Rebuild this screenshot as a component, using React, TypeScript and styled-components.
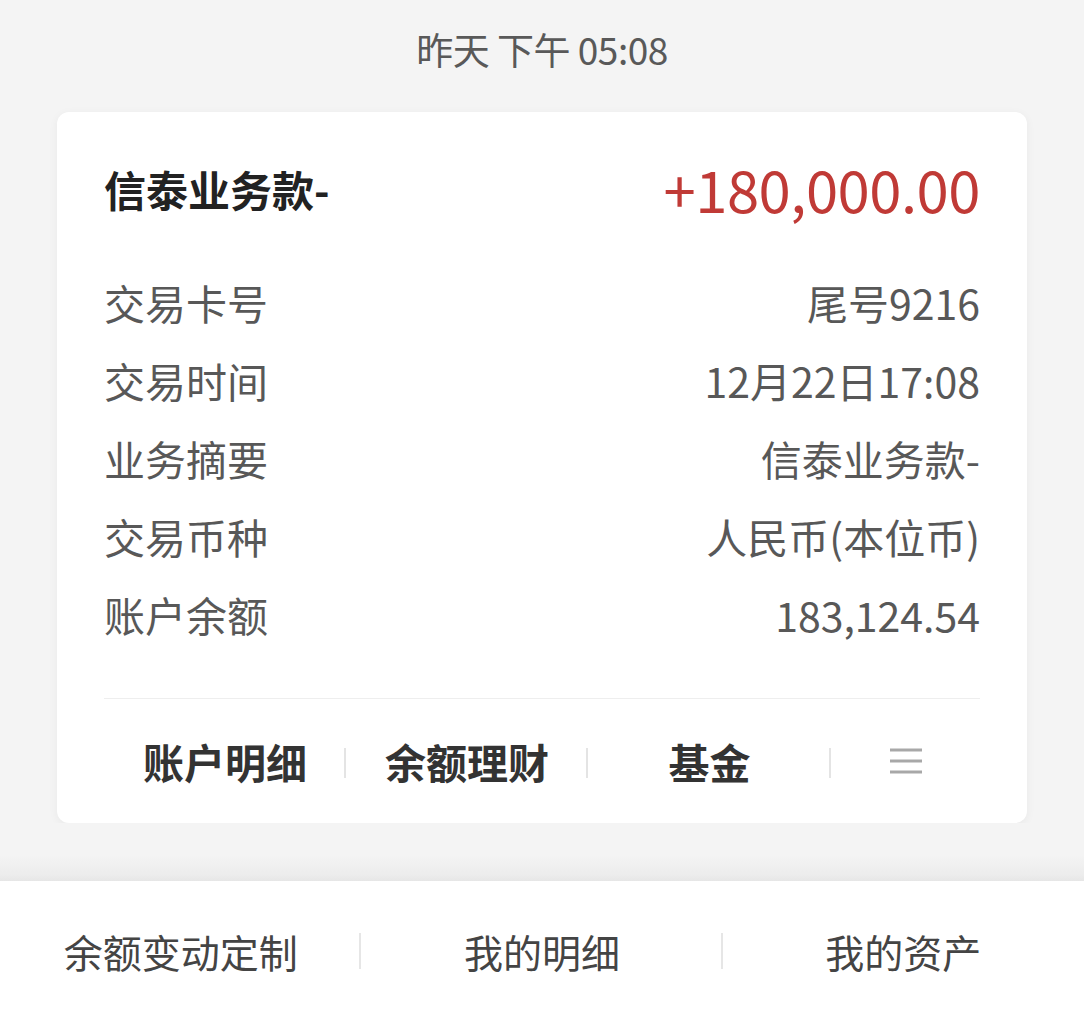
import React from "react";
import styled, { createGlobalStyle } from "styled-components";

const GlobalStyle = createGlobalStyle`
  html, body { margin: 0; padding: 0; background: #f4f4f4; }
  body { font-family: "Noto Sans CJK SC", "Noto Sans", sans-serif; }
  * { box-sizing: border-box; }
`;

const Page = styled.div`
  width: 1084px;
  min-height: 1018px;
  background: #f4f4f4;
  display: flex;
  flex-direction: column;
`;

const TimeBar = styled.div`
  height: 98px;
  display: flex;
  align-items: center;
  justify-content: center;
  font-size: 37px;
  color: #595959;
  letter-spacing: -0.5px;
`;

const Card = styled.div`
  margin: 14px 57px 0;
  background: #ffffff;
  border-radius: 12px;
  box-shadow: 0 2px 10px rgba(0, 0, 0, 0.05);
  padding: 46px 47px 27px;
`;

const Header = styled.div`
  height: 60px;
  display: flex;
  align-items: center;
  justify-content: space-between;
`;

const Title = styled.div`
  font-size: 42px;
  font-weight: 700;
  color: #222;
`;

const Amount = styled.div`
  font-size: 58px;
  font-weight: 400;
  color: #c03a36;
  letter-spacing: -0.5px;
`;

const Rows = styled.div`
  margin-top: 45px;
  display: flex;
  flex-direction: column;
`;

const Row = styled.div`
  height: 78px;
  display: flex;
  align-items: center;
  justify-content: space-between;
  font-size: 41px;
  color: #585858;
`;

const Divider = styled.div`
  margin-top: 45px;
  height: 1px;
  background: #eeeeee;
`;

const Actions = styled.div`
  margin-top: 27px;
  height: 70px;
  display: grid;
  grid-template-columns: 242px 242px 243px 1fr;
`;

const Action = styled.div<{ $sep?: boolean }>`
  position: relative;
  display: flex;
  align-items: center;
  justify-content: center;
  font-size: 41px;
  font-weight: 700;
  color: #333;
  ${(p) =>
    p.$sep
      ? `&::after {
    content: "";
    position: absolute;
    right: 0;
    top: 22px;
    width: 2px;
    height: 30px;
    background: #e4e4e4;
  }`
      : ""}
`;

const Gap = styled.div`
  height: 58px;
  background: linear-gradient(to bottom, #f4f4f4 0%, #f4f4f4 55%, #ececec 90%, #e6e6e6 100%);
`;

const BottomBar = styled.div`
  flex: 1;
  background: #fff;
  display: grid;
  grid-template-columns: repeat(3, 1fr);
  align-items: start;
  padding-top: 38px;
`;

const BottomItem = styled.div<{ $sep?: boolean }>`
  position: relative;
  height: 64px;
  display: flex;
  align-items: center;
  justify-content: center;
  font-size: 39px;
  color: #444;
  ${(p) =>
    p.$sep
      ? `&::after {
    content: "";
    position: absolute;
    right: 0;
    top: 14px;
    width: 2px;
    height: 36px;
    background: #e6e6e6;
  }`
      : ""}
`;

const MenuIcon = () => (
  <svg width="34" height="28" viewBox="0 0 34 28">
    <g stroke="#a8a8a8" strokeWidth="3">
      <line x1="1" y1="3" x2="33" y2="3" />
      <line x1="1" y1="14" x2="33" y2="14" />
      <line x1="1" y1="25" x2="33" y2="25" />
    </g>
  </svg>
);

const rows: [string, string][] = [
  ["交易卡号", "尾号9216"],
  ["交易时间", "12月22日17:08"],
  ["业务摘要", "信泰业务款-"],
  ["交易币种", "人民币(本位币)"],
  ["账户余额", "183,124.54"],
];

export default function App() {
  return (
    <>
      <GlobalStyle />
      <Page>
        <TimeBar>昨天 下午 05:08</TimeBar>
        <Card>
          <Header>
            <Title>信泰业务款-</Title>
            <Amount>+180,000.00</Amount>
          </Header>
          <Rows>
            {rows.map(([k, v]) => (
              <Row key={k}>
                <span>{k}</span>
                <span>{v}</span>
              </Row>
            ))}
          </Rows>
          <Divider />
          <Actions>
            <Action $sep>账户明细</Action>
            <Action $sep>余额理财</Action>
            <Action $sep>基金</Action>
            <Action>
              <MenuIcon />
            </Action>
          </Actions>
        </Card>
        <Gap />
        <BottomBar>
          <BottomItem $sep>余额变动定制</BottomItem>
          <BottomItem $sep>我的明细</BottomItem>
          <BottomItem>我的资产</BottomItem>
        </BottomBar>
      </Page>
    </>
  );
}
